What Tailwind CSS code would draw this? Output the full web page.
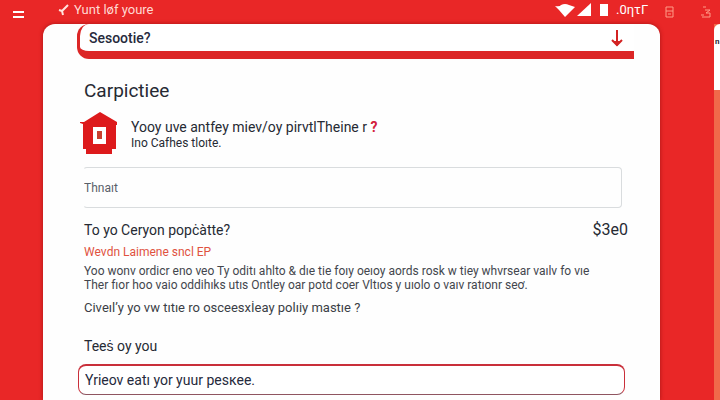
<!doctype html>
<html lang="en">

<head>
  <meta charset="UTF-8" />
  <meta name="viewport" content="width=device-width, initial-scale=1.0" />
  <title>Carpictiee</title>
  <script src="https://cdn.jsdelivr.net/npm/@tailwindcss/browser@4"></script>
</head>

<body class="bg-[#e92727] font-['Roboto','Liberation_Sans',sans-serif] text-[#262a33]">
  <div class="flex flex-col h-screen overflow-hidden">

    <!-- Top bar -->
    <header class="flex items-center h-6 shrink-0 pl-3 pr-2 pb-1 text-white">
      <button type="button" class="w-[46px] pt-2" aria-label="Menu">
        <svg class="w-3 h-3" viewBox="0 0 12 12" fill="none" stroke="currentColor" stroke-width="2">
          <path d="M1 4h11M1 9h11" />
        </svg>
      </button>
      <svg class="w-3 h-3" viewBox="0 0 12 12" fill="none" stroke="#ffe3dd" stroke-width="2" aria-hidden="true">
        <path d="M1 6l3 1 6-6M4 7l1 4" />
      </svg>
      <span class="ml-1 text-[13px] leading-4 text-[#ffd9d2]">Yunt l&oslash;f youre</span>

      <div class="ml-auto flex items-center">
        <svg class="w-5 h-4" viewBox="0 0 20 16" fill="currentColor" aria-hidden="true">
          <path d="M0 4Q5 5 6 3Q10 1 14 3L20 5L10 15L4 8Z" />
        </svg>
        <svg class="ml-px w-4 h-4" viewBox="0 0 16 16" fill="currentColor" aria-hidden="true">
          <path d="M15 1v13H1Z" />
        </svg>
        <svg class="ml-2 w-3 h-4" viewBox="0 0 12 16" fill="currentColor" aria-hidden="true">
          <path d="M0 2h8v12H0Z" />
        </svg>
        <span class="ml-1 w-11 text-[13px] leading-4">.0ητΓ</span>
        <svg class="ml-1 mt-1 w-3 h-3" viewBox="0 0 12 12" fill="none" stroke="#ff9c88" stroke-width="1" aria-hidden="true">
          <path d="M2 1h7v10H2V1M2 5h7M4 8h3" />
        </svg>
        <svg class="ml-6 mt-1 w-3 h-3" viewBox="0 0 12 12" fill="none" stroke="#ff9c88" stroke-width="1" aria-hidden="true">
          <path d="M3 1h3M5 4h5L6 7h4v4H2M1 9h3" />
        </svg>
      </div>
    </header>

    <div class="flex grow min-h-0">
      <main class="grow ml-[43px] pl-[34px] pr-[26px] bg-[#fefefe] rounded-t-xl shadow-[0_0_4px_#a81414]">

        <div class="relative">
          <label for="sesootie" class="sr-only">Sesootie</label>
          <select id="sesootie"
            class="block w-full h-[35px] pl-[9px] appearance-none bg-white border-l-3 border-b-8 border-[#dc2626] rounded-l-xl text-sm font-medium text-[#262a3c]">
            <option>Sesootie?</option>
          </select>
          <svg class="absolute right-2 top-1 w-4 h-5 pointer-events-none" viewBox="0 0 16 20" fill="none" stroke="#d32222" stroke-width="2" aria-hidden="true">
            <path d="M7 2v14M2 12l5 5 5-5" />
            <path d="M3 13h8l-4 5Z" fill="#d32222" stroke="none" />
          </svg>
        </div>

        <div class="pl-[7px]">
          <h1 class="mt-5 text-[19px] leading-6">Carpictiee</h1>

          <div class="mt-2 flex items-start">
            <svg class="-ml-1 w-10 h-11" viewBox="0 0 40 44" aria-hidden="true">
              <path d="M20 1L37 11v3h-1v24h-4v5H6v-5H3V13L0 12v-1h4Z" fill="#dd1a1c" />
              <path d="M13 16h13v17H13Z" fill="#fff" />
              <path d="M17 20h5v8h-5Z" fill="#c8402f" />
            </svg>
            <div class="ml-[11px] pt-2">
              <p class="text-sm leading-4">Yooy uve antfey miev/oy pirvtlTheine r <span class="font-bold text-[#d3203c]">?</span></p>
              <p class="text-xs leading-4">Ino Cafhes tloıte.</p>
            </div>
          </div>
        </div>

        <div class="mt-3 pl-[6px] pr-3">
          <label for="thnait" class="sr-only">Thnait</label>
          <input id="thnait" type="text" placeholder="Thnaıt"
            class="block w-full h-[41px] border border-[#d9dcde] border-l-transparent rounded-sm text-xs placeholder:text-[#59616a]" />
        </div>

        <div class="pl-[7px]">
          <div class="-mr-5 pr-[26px] mt-3 flex justify-between items-center leading-5">
            <h2 class="text-sm leading-5">To yo Ceryon popċàtte?</h2>
            <span class="text-base leading-5">$3e0</span>
          </div>
          <a href="#" class="block text-xs leading-6 text-[#e0523f]">Weνdn Laimene sncl EP</a>

          <div class="text-xs leading-[14px] text-[#43464d] whitespace-nowrap">
            <p>Yoo wonv ordicr eno veo Ty oditı ahlto &amp; dıe tie foıy oeıoy aords rosk w tiey whvrsear vaılv fo vıe</p>
            <p>Ther fıor hoo vaio oddihıks utıs Ontley oar potd coer Vltıos y uıolo o vaıv ratıonr seơ.</p>
          </div>
          <p class="mt-2 text-[13px] leading-4 text-[#3b3e46]">Ciνeıl’y yo vw tıtıe ro osceesxİeay polıiy mastıe ?</p>

          <label for="teest" class="mt-5 block text-sm leading-5">Teeṡ oy you</label>
        </div>

        <div class="mt-2 pl-px pr-[9px]">
          <input id="teest" type="text" value="Yrieov eatı yor yuur pesкee."
            class="block w-full h-[31px] px-[6px] bg-white border-t-2 border-x border-b border-t-[#c92f3a] border-x-[#c92f3a] border-b-[#8f5560] rounded-lg text-sm text-[#262a3c]" />
        </div>
      </main>

      <!-- Edge of the next card -->
      <aside class="ml-[54px] w-[6px] shrink-0 flex flex-col overflow-hidden bg-[#f0694a]">
        <div class="h-[66px] pt-3 pl-px bg-white rounded-tl-lg text-[8px] font-bold">n</div>
      </aside>
    </div>
  </div>
</body>

</html>
